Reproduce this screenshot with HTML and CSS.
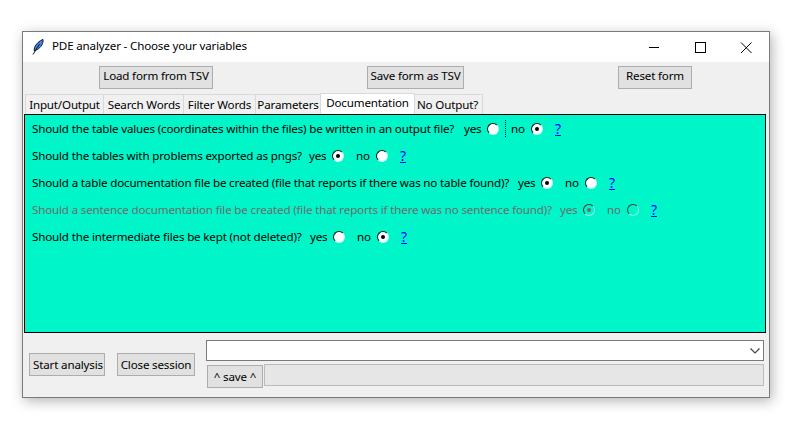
FILE: index.html
```html
<!DOCTYPE html>
<html lang="en">
<head>
<meta charset="utf-8">
<title>PDE analyzer</title>
<link rel="stylesheet" href="styles.css">
</head>
<body>
<div class="window">
  <div class="titlebar">
    <svg class="feather" width="16" height="16" viewBox="0 0 16 16"><path d="M13 0.500C9.500 1.500 6 5 4.500 8.500L4.200 12L7.500 10.500C11 8 13.500 4.500 13 0.500Z" fill="#3d86dc" stroke="#0d1a33" stroke-width="1"/><path d="M9.500 5L3 15.500" stroke="#0d1a33" stroke-width="1" fill="none"/></svg>
    <span class="title">PDE analyzer - Choose your variables</span>
    <div class="winctl">
      <svg width="46" height="30" viewBox="0 0 46 30"><path d="M18 15.500H28" stroke="#000"/></svg>
      <svg width="46" height="30" viewBox="0 0 46 30"><rect x="18.500" y="10.500" width="10" height="10" fill="none" stroke="#000"/></svg>
      <svg width="46" height="30" viewBox="0 0 46 30"><path d="M18 10.500L28.500 21M28.500 10.500L18 21" stroke="#000" fill="none"/></svg>
    </div>
  </div>
  <div class="toolbar">
    <button class="btn load">Load form from TSV</button>
    <button class="btn saveform">Save form as TSV</button>
    <button class="btn reset">Reset form</button>
  </div>
  <div class="tabs">
    <span class="tab t1">Input/Output</span>
    <span class="tab t2">Search Words</span>
    <span class="tab t3">Filter Words</span>
    <span class="tab t4">Parameters</span>
    <span class="tab active">Documentation</span>
    <span class="tab t6">No Output?</span>
  </div>
  <div class="panel">
    <div class="row">
      <span class="q q1">Should the table values (coordinates within the files) be written in an output file?</span>
      <span class="opt">yes</span><i class="radio"></i><i class="sep"></i><span class="opt after-sep">no</span><i class="radio on"></i><a class="help" href="#">?</a>
    </div>
    <div class="row">
      <span class="q q2">Should the tables with problems exported as pngs?</span>
      <span class="opt">yes</span><i class="radio on"></i><span class="opt wide">no</span><i class="radio"></i><a class="help" href="#">?</a>
    </div>
    <div class="row">
      <span class="q q3">Should a table documentation file be created (file that reports if there was no table found)?</span>
      <span class="opt">yes</span><i class="radio on"></i><span class="opt wide">no</span><i class="radio"></i><a class="help" href="#">?</a>
    </div>
    <div class="row off">
      <span class="q q4">Should a sentence documentation file be created (file that reports if there was no sentence found)?</span>
      <span class="opt">yes</span><i class="radio on"></i><span class="opt wide">no</span><i class="radio"></i><a class="help" href="#">?</a>
    </div>
    <div class="row">
      <span class="q q5">Should the intermediate files be kept (not deleted)?</span>
      <span class="opt">yes</span><i class="radio"></i><span class="opt wide">no</span><i class="radio on"></i><a class="help" href="#">?</a>
    </div>
  </div>
  <div class="footer">
    <button class="btn start">Start analysis</button>
    <button class="btn close">Close session</button>
    <div class="savebox">
      <div class="combo"><svg width="10" height="6" viewBox="0 0 10 6"><path d="M0.500 0.500L5 5L9.500 0.500" fill="none" stroke="#444" stroke-width="1.200"/></svg></div>
      <div class="saverow">
        <button class="btn save">^ save ^</button>
        <div class="progress"></div>
      </div>
    </div>
  </div>
</div>
</body>
</html>
```
FILE: styles.css
```css
html, body { margin: 0; height: 100%; background: #fff; overflow: hidden; }
body { padding: 31px 0 0 22px; box-sizing: border-box; font: 11.6px/16px "Noto Sans", sans-serif; letter-spacing: -0.17px; color: #000; }
.window { width: 748px; height: 367px; box-sizing: border-box; border: 1px solid #7a7a7a; background: #f0f0f0; box-shadow: 2px 3px 12px rgba(0,0,0,.3); display: flex; flex-direction: column; }
.titlebar { height: 30px; background: #fff; display: flex; align-items: center; flex: none; }
.feather { margin-left: 7px; flex: none; }
.title { margin: 0 0 2px 6px; }
.winctl { margin-left: auto; display: flex; }
.winctl svg { display: block; }
.toolbar { height: 31px; flex: none; display: flex; align-items: flex-start; padding-top: 4px; box-sizing: border-box; }
.btn { box-sizing: border-box; height: 23px; padding: 0; border: 1px solid #adadad; background: #e1e1e1; font: inherit; letter-spacing: inherit; color: #000; }
.toolbar .btn { padding-bottom: 4px; }
.load { width: 114px; margin-left: 76px; }
.saveform { width: 97px; margin-left: 154px; }
.reset { width: 74px; margin-left: 154px; }
.tabs { height: 21px; flex: none; display: flex; align-items: flex-end; padding-left: 3px; }
.tab { box-sizing: border-box; height: 20px; border: 1px solid #d9d9d9; border-bottom: 0; margin-left: -1px; text-align: center; line-height: 19px; }
.t1 { width: 79px; }
.t2 { width: 81px; padding-left: 1px; }
.t3 { width: 73px; }
.t4 { width: 66px; }
.active { width: 95px; height: 21px; background: #fff; line-height: 18px; }
.t6 { width: 69px; padding-right: 2px; }
.panel { box-sizing: border-box; height: 219px; margin: 0 3px 0 1px; border: 1px solid #000; background: #00f5c8; padding: 0 0 0 7px; flex: none; }
.row { height: 27px; display: flex; align-items: center; white-space: nowrap; }
.q { display: block; flex: none; }
.q1 { width: 432px; }
.q2 { width: 277px; }
.q3 { width: 486px; }
.q4 { width: 528px; }
.q5 { width: 278px; }
.opt { width: 23px; flex: none; }
.opt.wide { width: 20px; margin-left: 12px; }
.opt.after-sep { width: 20px; margin-left: 5px; }
.radio { flex: none; width: 12px; height: 12px; border-radius: 50%; background: #fff; box-sizing: border-box; border: 1px solid #111; border-right-color: #bff; border-bottom-color: #bff; position: relative; }
.radio.on::after { content: ""; position: absolute; left: 3px; top: 3px; width: 4px; height: 4px; background: #000; border-radius: 50%; }
.sep { flex: none; width: 1px; height: 18px; margin-left: 6px; background: repeating-linear-gradient(#000 0 1px, transparent 1px 2px); }
.help { margin-left: 12px; font-size: 14px; color: #00f; text-decoration: underline; }
.off { color: #6d6d6d; }
.off .radio { background: transparent; border-color: #333 #9ee #9ee #333; }
.off .radio.on::after { background: #6d6d6d; }
.footer { flex: 1; display: flex; align-items: flex-start; min-height: 0; }
.start { width: 76px; margin: 20px 0 0 6px; padding-left: 2px; }
.close { width: 78px; margin: 20px 0 0 12px; }
.savebox { margin: 7px 0 0 11px; width: 558px; }
.combo { box-sizing: border-box; height: 21px; border: 1px solid #7a7a7a; background: #fff; display: flex; align-items: center; justify-content: flex-end; padding-right: 3px; }
.saverow { display: flex; margin-top: 4px; align-items: flex-start; padding-left: 1px; }
.save { width: 56px; }
.progress { box-sizing: border-box; flex: 1; height: 22px; margin-left: 1px; margin-top: -1px; border: 1px solid #bcbcbc; background: #e6e6e6; }
```
